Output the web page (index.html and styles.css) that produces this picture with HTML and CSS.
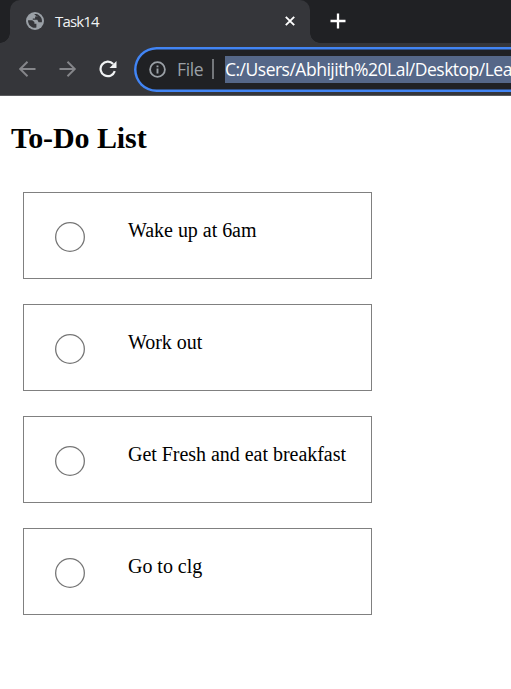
FILE: index.html
```html
<!DOCTYPE html>
<html lang="en">
<head>
<meta charset="utf-8">
<title>Task14</title>
<link rel="stylesheet" href="styles.css">
</head>
<body>
<header class="browser">
  <div class="tabstrip">
    <div class="tab">
      <svg class="globe" width="18" height="18" viewBox="0 0 18 18"><circle cx="9" cy="9" r="9" fill="#9aa0a6"/><path d="M2 8.2h4.200l2.200 1.900v1.600h2v3.800C6.300 16.600 2 13.500 2 8.200zM8.200 2.200c2.100-.4 3.300.1 4.400.8L11.200 4.500H9.100v2H6.800v1.300h4.500l1.300 2.400h3.300c.5-3-.8-5.600-3.300-7.200l-1.300 1.800z" fill="#35363a"/></svg>
      <span class="tab-title">Task14</span>
      <svg class="close" width="10" height="10" viewBox="0 0 10 10"><path d="M.8.8l8.400 8.400M9.200.8L.8 9.200" stroke="#fff" stroke-width="1.900"/></svg>
    </div>
    <svg class="plus" width="16" height="16" viewBox="0 0 16 16"><path d="M8 .5v15M.5 8h15" stroke="#fff" stroke-width="2.300"/></svg>
  </div>
  <div class="toolbar">
    <svg class="nav" width="18" height="16" viewBox="0 0 18 16"><path d="M16.500 8H1.500M8.500 .8L1.200 8l7.300 7.200" fill="none" stroke="#85868a" stroke-width="1.900"/></svg>
    <svg class="nav" width="18" height="16" viewBox="0 0 18 16"><path d="M.5 8h15M8.500 .8L15.800 8l-7.300 7.200" fill="none" stroke="#85868a" stroke-width="1.900"/></svg>
    <svg class="reload" width="18" height="18" viewBox="0 0 18 18"><path d="M14.200 3.900A7.300 7.300 0 1 0 15.800 11.200" fill="none" stroke="#f1f3f4" stroke-width="2.200"/><path d="M17.500 1v7h-7z" fill="#f1f3f4"/></svg>
    <div class="omnibox">
      <svg class="info" width="17" height="17" viewBox="0 0 17 17"><circle cx="8.500" cy="8.500" r="7.400" fill="none" stroke="#9aa0a6" stroke-width="1.800"/><path d="M8.500 7.500v5M8.500 4.500v1.700" stroke="#9aa0a6" stroke-width="1.900"/></svg>
      <span class="scheme">File</span>
      <span class="divider"></span>
      <span class="url">C:/Users/Abhijith%20Lal/Desktop/Lea</span>
    </div>
  </div>
</header>
<main>
  <h1>To-Do List</h1>
  <ul class="todos">
    <li><span class="check"></span><span class="label">Wake up at 6am</span></li>
    <li><span class="check"></span><span class="label">Work out</span></li>
    <li><span class="check"></span><span class="label">Get Fresh and eat breakfast</span></li>
    <li><span class="check"></span><span class="label">Go to clg</span></li>
  </ul>
</main>
</body>
</html>
```
FILE: styles.css
```css
* { box-sizing: border-box; }
body {
  margin: 0;
  height: 689px;
  overflow: hidden;
  background: #fff;
  color: #000;
  font-family: "Liberation Serif", serif;
}
svg { display: block; flex: none; }
.browser { font-family: "Open Sans", "Noto Sans", sans-serif; }
.tabstrip {
  display: flex;
  align-items: flex-start;
  height: 43px;
  padding-left: 10px;
  background: #202124;
}
.tab {
  position: relative;
  display: flex;
  align-items: center;
  width: 300px;
  height: 43px;
  padding: 0 15px 1px 16px;
  border-radius: 10px 10px 0 0;
  background: #35363a;
}
.tab::before, .tab::after {
  content: "";
  position: absolute;
  bottom: 0;
  width: 10px;
  height: 10px;
}
.tab::before { left: -10px; background: radial-gradient(circle at 0 0, #202124 9.500px, #35363a 10px); }
.tab::after { right: -10px; background: radial-gradient(circle at 100% 0, #202124 9.500px, #35363a 10px); }
.tab-title {
  margin-left: 11px;
  color: #f1f3f4;
  font-size: 15px;
  line-height: 20px;
  letter-spacing: -0.850px;
}
.close { margin-left: auto; }
.plus { margin: 13px 0 0 20px; }
.toolbar {
  display: flex;
  align-items: center;
  height: 53px;
  padding-left: 19px;
  border-bottom: 1px solid #5a5b5e;
  background: #35363a;
  overflow: hidden;
}
.nav { margin-right: 22px; }
.reload { margin-right: 17px; }
.omnibox {
  display: flex;
  flex: none;
  align-items: center;
  width: 420px;
  height: 45px;
  padding-left: 15px;
  border-radius: 23px;
  background: #202124;
  box-shadow: inset 0 0 0 2.500px #4285f4;
  font-size: 17.500px;
  white-space: nowrap;
}
.scheme { width: 27px; margin-left: 11px; color: #9aa0a6; letter-spacing: -0.400px; }
.divider { width: 2px; height: 20px; margin: 0 11px 0 8px; background: #74777b; }
.url {
  width: 320px;
  height: 27px;
  background: #556788;
  color: #fff;
  line-height: 27px;
  letter-spacing: -0.500px;
}
main { padding: 24px 10px 0; }
h1 { margin: 0 0 0 1px; font-size: 30px; line-height: 36px; letter-spacing: -0.080px; }
.todos {
  display: flex;
  flex-direction: column;
  gap: 25px;
  width: 349px;
  margin: 36px 0 0 13px;
  padding: 0;
  list-style: none;
}
.todos li {
  display: flex;
  align-items: flex-start;
  height: 87px;
  padding: 26px 0 0 31px;
  border: 1px solid #808080;
}
.check {
  width: 30px;
  height: 30px;
  margin-top: 3px;
  border-radius: 50%;
  box-shadow: inset 0 0 0 1.300px #767676;
}
.label {
  margin-left: 43px;
  font-size: 20px;
  line-height: 23px;
  letter-spacing: -0.030px;
  white-space: nowrap;
}
```
